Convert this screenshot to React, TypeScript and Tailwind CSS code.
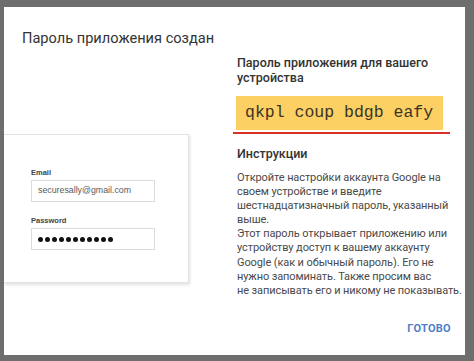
export default function App() {
  const lines = [
    "Откройте настройки аккаунта Google на",
    "своем устройстве и введите",
    "шестнадцатизначный пароль, указанный",
    "выше.",
    "Этот пароль открывает приложению или",
    "устройству доступ к вашему аккаунту",
    "Google (как и обычный пароль). Его не",
    "нужно запоминать. Также просим вас",
    "не записывать его и никому не показывать.",
  ];

  return (
    <div className="w-[474px] h-[361px] bg-[#6e6e6e] pl-[4px] pt-[7px] overflow-hidden">
      <div className="w-[461px] h-[348px] bg-white flex flex-col font-['Roboto',sans-serif]">
        {/* title */}
        <div className="pl-[18px] pt-[20px] h-[42px] text-[14.6px] leading-[22px] text-[#333]">
          Пароль приложения создан
        </div>

        <div className="flex flex-1">
          {/* login card */}
          <div className="w-[185px] shrink-0 pt-[85px]">
            <div className="h-[149px] bg-white border border-[#e2e2e2] border-l-0 shadow-[1px_2px_3px_rgba(0,0,0,0.12)] pl-[27px] pt-[32px] font-['Liberation_Sans',Arial,sans-serif]">
              <div className="text-[7.5px] font-bold leading-[12px] text-[#444]">Email</div>
              <div className="mt-[1px] w-[124px] h-[22px] border border-[#dcdcdc] flex items-center pl-[6px] text-[8.8px] text-[#5a5a5a]">
                securesally@gmail.com
              </div>
              <div className="mt-[13px] text-[7.5px] font-bold leading-[12px] text-[#444]">Password</div>
              <div className="mt-[1px] w-[124px] h-[22px] border border-[#dcdcdc] flex items-center gap-[2px] pl-[6px]">
                {Array.from({ length: 11 }).map((_, i) => (
                  <span key={i} className="w-[5px] h-[5px] rounded-full bg-[#111]" />
                ))}
              </div>
            </div>
          </div>

          {/* right column */}
          <div className="ml-[48px] w-[222px] pt-[6px] flex flex-col">
            <div className="text-[12.5px] leading-[15px] font-medium text-[#333]">
              Пароль приложения для вашего
              <br />
              устройства
            </div>
            <div className="mt-[11px] w-[207px] h-[34px] -ml-[1px] bg-[#fcd062] flex items-center pl-[9px] font-['Liberation_Mono','Courier_New',monospace] text-[16.5px] text-[#3a3428]">
              qkpl coup bdgb eafy
            </div>
            <div className="mt-[2px] -ml-[4px] w-[217px] h-[2px] bg-[#d9302a]" />
            <div className="mt-[12px] text-[12.5px] leading-[15px] font-medium text-[#333]">Инструкции</div>
            <div className="mt-[10px] text-[11px] leading-[14.1px] tracking-[-0.1px] text-[#4a4a4a]">
              {lines.map((l) => (
                <div key={l} className="whitespace-nowrap">
                  {l}
                </div>
              ))}
            </div>
            <div className="mt-[23px] pr-[8px] text-right text-[11px] font-bold text-[#4f80c4] tracking-[0.3px]">
              ГОТОВО
            </div>
          </div>
        </div>
      </div>
    </div>
  );
}
